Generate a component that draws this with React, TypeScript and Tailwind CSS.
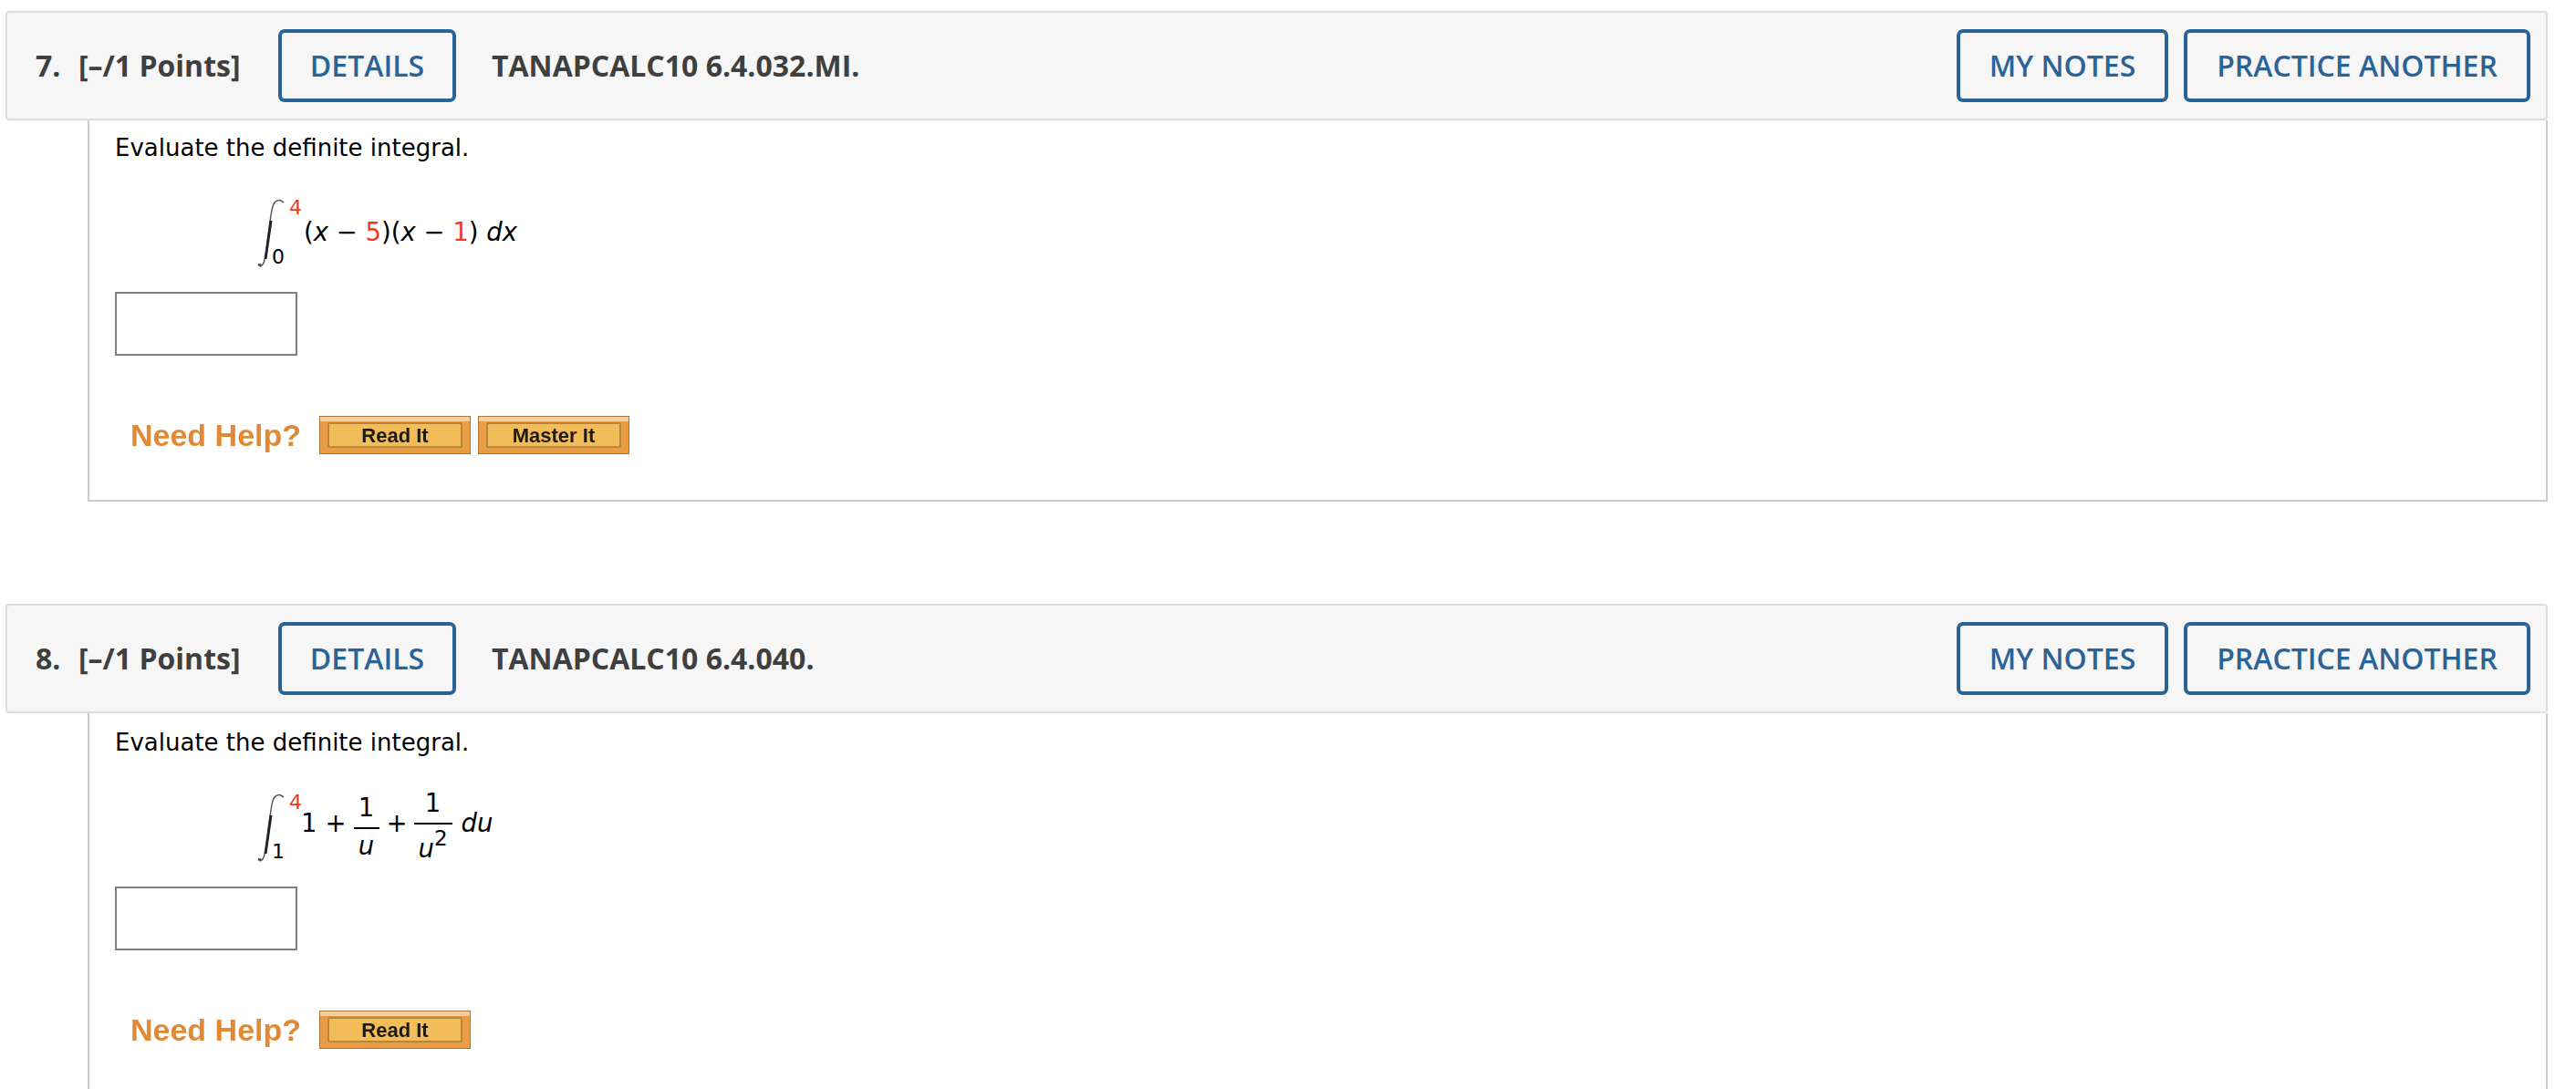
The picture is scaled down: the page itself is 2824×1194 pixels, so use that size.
import type { ReactNode } from 'react';

const Red = ({ children }: { children: ReactNode }) => (
    <span className="text-[#f03a1f]">{children}</span>
);

const OutlineButton = ({ label, width }: { label: string; width: string }) => (
    <button
        className={`${width} h-[80px] rounded-[7px] border-[4px] border-[#2a6496] text-[#2a6496] text-[32px] font-semibold text-center`}
    >
        {label}
    </button>
);

const IntegralSign = () => (
    <svg width="30" height="75" viewBox="0 0 30 75" className="shrink-0">
        <path
            d="M1 72 C3 75 6 74 7.5 69 C11 50 13 30 16 12 C17.500 4 21 1 25 1.500 L29 4"
            fill="none"
            stroke="#555"
            strokeWidth="1.500"
        />
        <path d="M8 66 L13.500 24 L16.500 24 L10.500 66 Z" fill="#222" />
        <path d="M1 71 L4 71 L5 74 L2 74 Z" fill="#555" />
    </svg>
);

const Limits = ({ lower }: { lower: string }) => (
    <div className="flex flex-col justify-between h-[78px] text-[22px] leading-[24px] -ml-[14px] w-[32px] shrink-0">
        <span className="pl-[19px]">
            <Red>4</Red>
        </span>
        <span>{lower}</span>
    </div>
);

const HelpButton = ({ label }: { label: string }) => (
    <div className="w-[166px] h-[42px] border border-[#a9743a] bg-[#ea9c42] px-[8px] pt-[6px] pb-[6px] shadow-[inset_0_5px_0_#f3cfa0]">
        <div className="h-full pt-[1px] border-2 border-[#b8853f] rounded-[2px] bg-[#f2bd58] flex items-center justify-center font-['Liberation_Sans',sans-serif] font-bold text-[22px] text-[#1f1a12] blur-[0.5px]">
            {label}
        </div>
    </div>
);

const Question = ({
    number,
    code,
    promptTop,
    helpLabels,
    formula,
}: {
    number: string;
    code: string;
    promptTop: string;
    helpLabels: string[];
    formula: ReactNode;
}) => (
    <section>
        <header className="h-[120px] bg-[#f6f6f6] border-2 border-[#dddddd] rounded-[4px] flex items-center pl-[31px] pr-[17px] text-[#3f3f3f] font-['Open_Sans',sans-serif]">
            <span className="font-bold text-[32px] w-[47px]">{number}</span>
            <span className="font-bold text-[32px] w-[219px]">
                [–/1 Points]
            </span>
            <OutlineButton label="DETAILS" width="w-[195px]" />
            <span className="font-bold text-[32px] ml-[39px]">{code}</span>
            <div className="ml-auto flex gap-[17px]">
                <OutlineButton label="MY NOTES" width="w-[232px]" />
                <OutlineButton label="PRACTICE ANOTHER" width="w-[380px]" />
            </div>
        </header>
        <div className="ml-[90px] h-[418px] border-x-2 border-b-2 border-[#cccccc] pl-[28px] font-['DejaVu_Sans',sans-serif] text-black">
            <p className={`${promptTop} text-[26px] leading-[32px]`}>
                Evaluate the definite integral.
            </p>
            <div className="mt-[38px] ml-[156px] flex items-center h-[78px] text-[27.5px]">
                {formula}
            </div>
            <div className="mt-[26px] w-[200px] h-[70px] border-2 border-[#808080] bg-white" />
            <div className="mt-[66px] h-[42px] flex items-center ml-[17px]">
                <span className="font-['Liberation_Sans',sans-serif] font-bold text-[34px] leading-none text-[#e08a35] w-[207px] blur-[0.5px]">
                    Need Help?
                </span>
                <div className="flex gap-[8px]">
                    {helpLabels.map((label) => (
                        <HelpButton key={label} label={label} />
                    ))}
                </div>
            </div>
        </div>
    </section>
);

const Fraction = ({
    bottom,
    className,
}: {
    bottom: ReactNode;
    className: string;
}) => (
    <div className={`${className} flex flex-col items-center leading-[30px]`}>
        <span className="border-b-2 border-black w-full text-center pb-[7px]">
            1
        </span>
        {bottom}
    </div>
);

export default function App() {
    return (
        <div className="h-[1194px] overflow-hidden bg-white pt-[12px] pl-[6px] w-[2793px] flex flex-col gap-[112px]">
            <Question
                number="7."
                code="TANAPCALC10 6.4.032.MI."
                promptTop="pt-[14px]"
                helpLabels={['Read It', 'Master It']}
                formula={
                    <>
                        <IntegralSign />
                        <Limits lower="0" />
                        <span className="ml-[3px] whitespace-pre">
                            (<i>x</i> − <Red>5</Red>)(<i>x</i> − <Red>1</Red>){' '}
                            <i>dx</i>
                        </span>
                    </>
                }
            />
            <Question
                number="8."
                code="TANAPCALC10 6.4.040."
                promptTop="pt-[16px]"
                helpLabels={['Read It']}
                formula={
                    <>
                        <IntegralSign />
                        <Limits lower="1" />
                        <div className="flex items-center mb-[8px]">
                            <span>1</span>
                            <span className="ml-[9px]">+</span>
                            <Fraction
                                className="ml-[8px] w-[28px] mt-[6px]"
                                bottom={<i className="pt-[3px]">u</i>}
                            />
                            <span className="ml-[8px]">+</span>
                            <Fraction
                                className="ml-[7px] w-[42px] mt-[4px]"
                                bottom={
                                    <i className="pt-[11px] whitespace-nowrap">
                                        u
                                        <span className="not-italic text-[23px] leading-[0px] align-[13px]">
                                            2
                                        </span>
                                    </i>
                                }
                            />
                            <i className="ml-[10px]">du</i>
                        </div>
                    </>
                }
            />
        </div>
    );
}
